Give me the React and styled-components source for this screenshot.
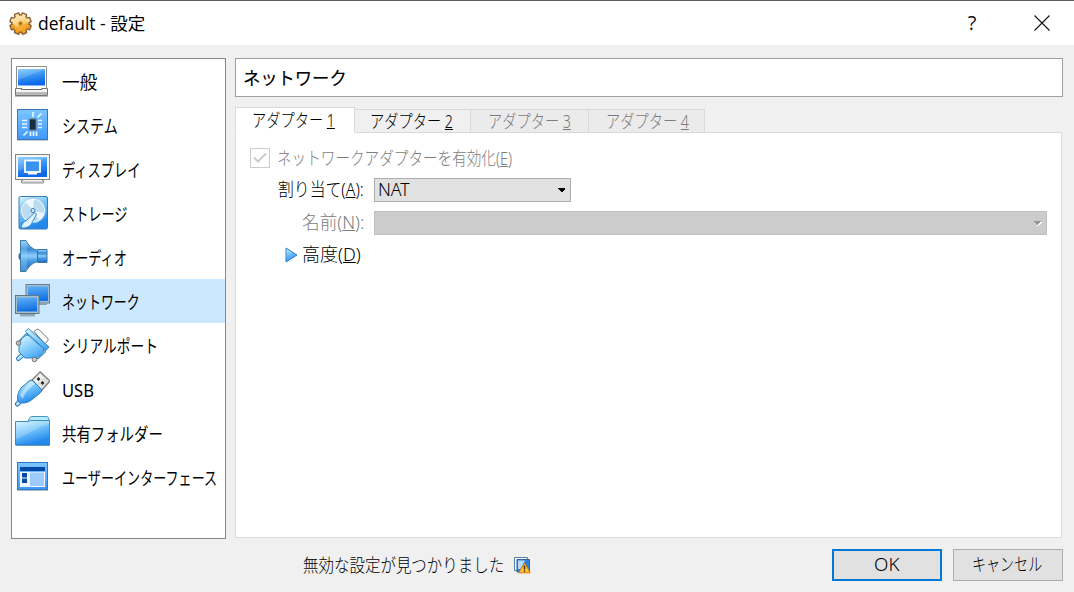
import React from 'react';
import styled, { createGlobalStyle } from 'styled-components';

const Global = createGlobalStyle`
  * { box-sizing: border-box; }
  html, body { margin: 0; padding: 0; background: #f0f0f0; overflow: hidden; }
  body { font-family: "Noto Sans", "Noto Sans CJK JP", sans-serif; font-size: 18px; color: #000; }
  svg { display: block; flex: none; }
`;

const Window = styled.div`
  width: 1074px;
  height: 592px;
  display: flex;
  flex-direction: column;
  background: #f0f0f0;
  border-top: 1px solid #5d5b5d;
`;

const TitleBar = styled.header`
  height: 44px;
  display: flex;
  align-items: center;
  padding: 0 22px 0 8px;
  background: #fff;
  flex: none;
`;

const TitleText = styled.h1`
  flex: 1;
  margin: 0 0 0 5px;
  font: 400 17.5px/24px "Open Sans", "Noto Sans CJK JP", sans-serif;
`;

const CaptionButton = styled.button`
  display: flex;
  align-items: center;
  justify-content: center;
  width: 20px;
  height: 24px;
  margin-left: ${p => p.$gap || 0}px;
  padding: 0;
  border: 0;
  background: none;
  font: 400 20px/24px "Open Sans", sans-serif;
  color: #111;
`;

const Body = styled.main`
  display: flex;
  gap: 9px;
  padding: 13px 11px 0;
  height: 494px;
  flex: none;
`;

const Sidebar = styled.nav`
  width: 215px;
  border: 1px solid #828790;
  background: #fff;
`;

const NavItem = styled.div`
  display: flex;
  align-items: center;
  gap: 12px;
  height: 44px;
  padding-left: 2px;
  background: ${p => (p.$active ? '#cce8ff' : 'transparent')};
`;

const Label = styled.span`
  display: inline-block;
  flex: none;
  white-space: nowrap;
  width: ${p => p.$width}px;
  height: 26px;
  line-height: 26px;
  font-size: ${p => p.$size || 18}px;
  font-weight: ${p => p.$weight || 400};
  color: ${p => (p.$disabled ? '#7c7c7c' : '#000')};
  -webkit-text-stroke: ${p => p.$stroke || 0}px currentColor;
  > span {
    display: inline-block;
    transform-origin: left;
    transform: scaleX(${p => p.$scale || 1});
  }
  u { text-decoration-thickness: 1px; text-underline-offset: 1px; text-decoration-skip-ink: none; }
`;

const NavLabel = styled(Label)`
  margin-top: 2px;
`;

function Text({ children, as: Tag = Label, ...rest }) {
  return <Tag {...rest}><span>{children}</span></Tag>;
}

const Content = styled.section`
  width: 828px;
  display: flex;
  flex-direction: column;
`;

const PageHeader = styled.div`
  height: 39px;
  padding: 6px 0 0 7px;
  border: 1px solid #a0a0a0;
  background: #fff;
  flex: none;
`;

const Tabs = styled.div`
  display: flex;
  align-items: flex-end;
  height: 26px;
  margin: 10px 0 -1px;
  flex: none;
  position: relative;
  z-index: 1;
`;

const Tab = styled.div`
  display: flex;
  width: ${p => p.$w}px;
  height: ${p => (p.$active ? 26 : 24)}px;
  padding: 0 0 0 ${p => p.$pad}px;
  border: 1px solid #d9d9d9;
  border-left-width: ${p => (p.$active ? 1 : 0)}px;
  border-bottom-color: ${p => (p.$active ? '#fff' : '#d9d9d9')};
  background: ${p => (p.$active ? '#fff' : p.$disabled ? '#ebebeb' : '#f0f0f0')};
  > * { line-height: ${p => (p.$active ? 24 : 23)}px; }
`;

const Pane = styled.div`
  width: 827px;
  height: 406px;
  flex: none;
  padding: 12px 14px;
  border: 1px solid #dcdcdc;
  background: #fff;
`;

const Row = styled.div`
  display: flex;
  align-items: center;
  justify-content: flex-start;
  height: ${p => p.$h || 33}px;
  ${Label} { line-height: 24px; }
`;

const FieldLabel = styled.div`
  display: flex;
  justify-content: flex-end;
  width: 114px;
  margin-right: 10px;
`;

const CheckBox = styled.div`
  width: 20px;
  height: 20px;
  margin-right: 7px;
  margin-top: -1px;
  border: 1px solid #ccc;
  background: #fff;
`;

const Combo = styled.div`
  display: flex;
  align-items: center;
  justify-content: space-between;
  width: ${p => p.$w}px;
  height: 24px;
  padding: 0 4px 0 3px;
  border: 1px solid ${p => (p.$disabled ? '#bfbfbf' : '#adadad')};
  background: ${p => (p.$disabled ? '#ccc' : '#e1e1e1')};
`;

const Expander = styled.div`
  display: flex;
  align-items: center;
  gap: 4px;
  padding-left: 35px;
`;

const Footer = styled.footer`
  display: flex;
  align-items: center;
  height: 51px;
  padding: 0 11px 0 303px;
`;

const Warning = styled.div`
  display: flex;
  align-items: center;
  gap: 10px;
  flex: 1;
`;

const Button = styled.button`
  display: flex;
  align-items: center;
  justify-content: center;
  width: 110px;
  height: 32px;
  padding: 0 2px 0 0;
  margin-left: 11px;
  font-family: inherit;
  background: #e1e1e1;
  border: ${p => (p.$primary ? '2px solid #0078d7' : '1px solid #adadad')};
  ${Label} { line-height: 25px; }
`;

const DefsSvg = styled.svg`
  position: absolute;
`;

const Defs = () => (
  <DefsSvg width="0" height="0">
    <defs>
      <linearGradient id="screen" x1="0" y1="0" x2="0.25" y2="1">
        <stop offset="0" stopColor="#7cc8fb" /><stop offset=".45" stopColor="#3b97f3" /><stop offset="1" stopColor="#0b66ea" />
      </linearGradient>
      <linearGradient id="monitor" x1="0" y1="0" x2="0.15" y2="1">
        <stop offset="0" stopColor="#5fb0f5" /><stop offset="1" stopColor="#1270e2" />
      </linearGradient>
      <linearGradient id="soft" x1="0" y1="0" x2="0.4" y2="1">
        <stop offset="0" stopColor="#d9f5ff" /><stop offset=".45" stopColor="#7ac9fb" /><stop offset="1" stopColor="#2388ec" />
      </linearGradient>
      <linearGradient id="plug" x1="0" y1="0" x2="0.6" y2="1">
        <stop offset="0" stopColor="#e4f7ff" /><stop offset=".5" stopColor="#92d4fc" /><stop offset="1" stopColor="#4aa9f4" />
      </linearGradient>
      <linearGradient id="chip" x1="0" y1="0" x2="0" y2="1">
        <stop offset="0" stopColor="#7dc6ff" /><stop offset="1" stopColor="#3f98fa" />
      </linearGradient>
      <linearGradient id="cone" x1="0" y1="0" x2="0" y2="1">
        <stop offset="0" stopColor="#a5dcff" /><stop offset=".28" stopColor="#3488d4" /><stop offset=".5" stopColor="#8ed0fb" /><stop offset=".65" stopColor="#4a9fe6" /><stop offset="1" stopColor="#1c69b8" />
      </linearGradient>
      <linearGradient id="gold" gradientUnits="userSpaceOnUse" x1="-5" y1="-10" x2="5" y2="10">
        <stop offset="0" stopColor="#fff4d4" /><stop offset=".45" stopColor="#fad27c" /><stop offset="1" stopColor="#f09a12" />
      </linearGradient>
    </defs>
  </DefsSvg>
);

const Icon = ({ children }) => <svg width="36" height="36" viewBox="0 0 36 36">{children}</svg>;

const GeneralIcon = () => (
  <Icon>
    <path d="M2.500 3.500H32.500V26H2.500Z" fill="#fff" stroke="#8d8d8d" />
    <path d="M4 6H31V22.500H4Z" fill="url(#screen)" />
    <path d="M4 6H31L4 17Z" fill="#fff" opacity=".16" />
    <path d="M1.500 25.500H33.500V32.500H1.500Z" fill="#f5f5f5" stroke="#777" />
    <path d="M7.500 25V26.500H28V25" fill="#fff" stroke="#666" />
    <path d="M2 29H33V32H2Z" fill="#b9b9b9" />
    <path d="M1 33.500H34" stroke="#bbb" />
  </Icon>
);

const SystemIcon = () => (
  <Icon>
    <rect x="3.500" y="2.500" width="30" height="30" fill="url(#chip)" stroke="#3577bb" />
    <path d="M3 33.500H34" stroke="#ccc" />
    <rect x="15.500" y="12" width="6.500" height="11" fill="#182c43" stroke="#6b7986" />
    <path d="M19 5V10M8 13.500H13M8 17H13M8 20.500H13M24 13.500H28M24 17H28M24 20.500H28M16.500 24.500V29M19.500 24.500V29M22.500 24.500V29M23.500 10.500L27.500 6.500M9.500 28.500L13.500 24.500" stroke="#e2f6ff" strokeWidth="1.700" />
  </Icon>
);

const DisplayIcon = () => (
  <Icon>
    <rect x="1.500" y="3.500" width="34" height="25" fill="#f7f7f4" stroke="#858585" />
    <rect x="4" y="6" width="29" height="20" fill="url(#screen)" />
    <path d="M4 6H33L4 20Z" fill="#fff" opacity=".17" />
    <rect x="11" y="9.500" width="15" height="11.500" fill="#3a91ee" stroke="#fff" strokeWidth="1.800" />
    <path d="M14 22.500H23" stroke="#fff" strokeWidth="2" />
    <path d="M7.500 29.500H29.500V32H7.500Z" fill="#d5d5d5" stroke="#929292" />
    <path d="M9 29.500H28" stroke="#f4f4f4" />
  </Icon>
);

const StorageIcon = () => (
  <Icon>
    <rect x="5" y="1.500" width="28.500" height="32.500" rx="1.500" fill="url(#soft)" stroke="#347cb7" />
    <path d="M7 28L32 24V33H7Z" fill="#278ae7" opacity=".45" />
    <circle cx="19" cy="15.500" r="11.800" fill="#bcdcf1" stroke="#f4fcff" strokeWidth="1.400" />
    <path d="M19 15L11 7A11 11 0 0 1 20 4ZM19 16L30 18A11 11 0 0 1 25 25Z" fill="#fff" opacity=".75" />
    <circle cx="19" cy="15.500" r="12.400" fill="none" stroke="#69aada" strokeWidth=".6" />
    <circle cx="19" cy="15.500" r="2" fill="#d9eef8" stroke="#3579ad" />
    <path d="M21 17.500L22.500 19L18 28C16 32 10 34 7 32.500C7.500 29 9.500 27 13 25Z" fill="#e1f4fe" stroke="#3a8acb" />
  </Icon>
);

const AudioIcon = () => (
  <Icon>
    <path d="M8 13.500C4 12.500 4 22.500 8 21.500Z" fill="#2879bd" stroke="#216299" />
    <path d="M6.500 1.500H12C14 6 18 10 23.500 11.500V22.500C18 24 14 28 12 32.500H6.500Z" fill="url(#cone)" stroke="#3979ac" />
    <path d="M7 2H13V32H7Z" fill="#8ccbf8" opacity=".4" />
    <path d="M23.500 10.500H33V23.500H23.500Z" fill="url(#cone)" stroke="#3772a4" />
  </Icon>
);

const NetworkIcon = () => (
  <Icon>
    <rect x="12" y="1.500" width="23.500" height="18.500" fill="#a1bdcf" stroke="#657e91" />
    <rect x="14" y="3.500" width="20" height="14.500" fill="url(#monitor)" />
    <path d="M25 20H33V22H25Z" fill="#8ba2b0" />
    <rect x="1.500" y="12.500" width="23.500" height="18" fill="#a4c0cd" stroke="#5f7888" />
    <rect x="3" y="14.500" width="20" height="14" fill="url(#monitor)" />
    <path d="M6.500 31.500H20.500V33H6.500Z" fill="#acc0c8" stroke="#758995" strokeWidth=".7" />
  </Icon>
);

const SerialIcon = () => (
  <Icon>
    <path d="M20 4.500L22.500 2.500Q24 1.500 25.500 3L33.500 11Q35 12.500 33.500 14L31 17Z" fill="#f8f8f8" stroke="#777" />
    <path d="M5 14L12 6.500L15 9L7.500 17Z" fill="#92caf3" stroke="#3377ab" />
    <path d="M21 30L29 22L32 24.500L24 32Z" fill="#92caf3" stroke="#3377ab" />
    <path d="M9 27.500L4.500 31.500" stroke="#2a79bc" strokeWidth="5" strokeLinecap="round" />
    <path d="M9 27.500L4.500 31.500" stroke="#b9e4fc" strokeWidth="3" strokeLinecap="round" />
    <path d="M14 8L30 22C29 27 25 31 19 31H11L5 25V19C6 13 9 9 14 8Z" fill="url(#plug)" stroke="#278ace" strokeLinejoin="round" />
    <path d="M11.500 4.500L14.500 1.500L35 20L32 23.500Z" fill="url(#plug)" stroke="#2f86c9" strokeLinejoin="round" />
    <circle cx="4.500" cy="16" r="2.300" fill="#bbb" stroke="#777" />
    <circle cx="20.500" cy="32.500" r="2.300" fill="#ccc" stroke="#777" />
  </Icon>
);

const UsbIcon = () => (
  <Icon>
    <path d="M18 9L26 .8L36 10L27 20Z" fill="#dededc" stroke="#777" strokeWidth="1.200" strokeLinejoin="round" />
    <path d="M20 9L26 3L30 6.500L23 12Z" fill="#fff" opacity=".6" />
    <path d="M23.500 7L25.500 9M27.500 11L29.500 13" stroke="#222" strokeWidth="2.500" />
    <path d="M6 30L3.500 33" stroke="#2470a8" strokeWidth="5" strokeLinecap="round" />
    <path d="M6 30L3.500 33" stroke="#b4e0fa" strokeWidth="3" strokeLinecap="round" />
    <path d="M15 10Q17 8 19 10L27.500 18.500Q28 20 26 22L18 28.500C14 32 8 33 5 31C2 28 4 20 8 16Z" fill="url(#soft)" stroke="#257bc3" />
    <path d="M6 24C9 18 14 13 18 10L21 13C15 17 10 23 9 28Z" fill="#fff" opacity=".45" />
  </Icon>
);

const FolderIcon = () => (
  <Icon>
    <path d="M13.500 7L16 2.500Q16.500 1.500 18 1.500H33Q35 2 35 5V10H13Z" fill="#b5ecfd" stroke="#4994bc" />
    <path d="M1.500 6.500H14L17 5.500H35.500V30H1.500Z" fill="url(#soft)" stroke="#408cbb" />
    <path d="M2 7H14L17 6H35V9C22 12 12 21 2 24Z" fill="#fff" opacity=".2" />
    <path d="M2 30H36" stroke="#2378cf" />
  </Icon>
);

const UiIcon = () => (
  <Icon>
    <rect x="3.500" y="3.500" width="30" height="27" fill="url(#chip)" stroke="#287bcb" />
    <path d="M6 8H31V12H6Z" fill="#0749a8" />
    <path d="M6 13H31V28H6Z" fill="#eef8ff" />
    <path d="M16 13.500H30V27H16Z" fill="#9dcaff" />
    <path d="M8 14H13V18.500H8ZM8 19.500H13V24H8Z" fill="#0749a8" />
    <path d="M3 31.500H34" stroke="#bbb" />
  </Icon>
);

const teeth = [0, 45, 90, 135, 180, 225, 270, 315];

const GearIcon = () => (
  <svg width="25" height="25" viewBox="-12.500 -12.500 25 25">
    <g fill="#bfae9c" opacity=".55" transform="translate(.6 1.200)">
      {teeth.map(a => <rect key={a} x="-2.800" y="-11" width="5.600" height="6" rx="1" transform={`rotate(${a + 22.5})`} />)}
    </g>
    <g fill="#86592e">
      {teeth.map(a => <rect key={a} x="-3" y="-11.300" width="6" height="6" rx="1.300" transform={`rotate(${a + 22.5})`} />)}
      <circle r="9.200" />
    </g>
    <g fill="url(#gold)">
      <circle r="8" />
    </g>
    <g fill="#fbd384">
      {teeth.map(a => <rect key={a} x="-1.800" y="-10" width="3.600" height="4" rx=".6" fill={a > 60 && a < 240 ? '#f3a32a' : '#fce0a4'} transform={`rotate(${a + 22.5})`} />)}
    </g>
    <path d="M-7.500 2C-3 3.500 3 2 7.500 -2C8.500 4 4 8 0 8C-4 8 -7 5 -7.500 2Z" fill="#f0a01c" opacity=".5" />
    <circle r="1.900" fill="#a86d18" stroke="#dfa241" />
  </svg>
);

const WarningIcon = () => (
  <svg width="17" height="18" viewBox="0 0 17 18">
    <path d="M.5 1.500H13.500V14.500H.5Z" fill="#f4faff" stroke="#547da8" />
    <path d="M3 3.500H15.500V16H3Z" fill="#2f7fda" stroke="#32629c" />
    <path d="M4 4.500H11L6.500 13H4Z" fill="#b5ddff" />
    <path d="M10.500 7L16.200 16.800H4.800Z" fill="#ffc535" stroke="#e77d00" strokeLinejoin="round" />
    <path d="M10.500 9.500V13.500M10.500 14.300V15.800" stroke="#3d2b10" strokeWidth="1.400" />
  </svg>
);

const Arrow = ({ disabled }) => (
  <svg width="9" height="5" viewBox="0 0 9 5" shapeRendering="crispEdges">
    {disabled && <path d="M8.500 1L4.500 5" stroke="#fff" strokeWidth="1.500" />}
    <path d={disabled ? 'M0 0H8L4 4Z' : 'M1 0H8V1L4.500 4.500L1 1Z'} fill={disabled ? '#969696' : '#000'} />
  </svg>
);

const nav = [
  ['一般', GeneralIcon, 0.98],
  ['システム', SystemIcon, 0.78],
  ['ディスプレイ', DisplayIcon, 0.735],
  ['ストレージ', StorageIcon, 0.73],
  ['オーディオ', AudioIcon, 0.73],
  ['ネットワーク', NetworkIcon, 0.72],
  ['シリアルポート', SerialIcon, 0.762],
  ['USB', UsbIcon, 0.92],
  ['共有フォルダー', FolderIcon, 0.8],
  ['ユーザーインターフェース', UiIcon, 0.726],
];

export default function App() {
  return (
    <Window>
      <Global />
      <Defs />
      <TitleBar>
        <GearIcon />
        <TitleText>default - 設定</TitleText>
        <CaptionButton>?</CaptionButton>
        <CaptionButton $gap={50}>
          <svg width="16" height="16" viewBox="0 0 16 16"><path d="M.5 .5L15.500 15.500M15.500 .5L.5 15.500" stroke="#111" strokeWidth="1.100" /></svg>
        </CaptionButton>
      </TitleBar>
      <Body>
        <Sidebar>
          {nav.map(([name, Glyph, scale]) => (
            <NavItem key={name} $active={name === 'ネットワーク'}>
              <Glyph />
              <Text as={NavLabel} $width={156} $scale={scale}>{name}</Text>
            </NavItem>
          ))}
        </Sidebar>
        <Content>
          <PageHeader><Text $width={110} $scale={0.96} $stroke={0.15}>ネットワーク</Text></PageHeader>
          <Tabs>
            <Tab $active $w={120} $pad={16}><Text $width={84} $scale={0.79} $weight={300}>アダプター <u>1</u></Text></Tab>
            <Tab $w={116} $pad={15}><Text $width={84} $scale={0.79} $weight={300}>アダプター <u>2</u></Text></Tab>
            <Tab $w={118} $pad={17} $disabled><Text $width={84} $scale={0.79} $weight={300} $disabled>アダプター <u>3</u></Text></Tab>
            <Tab $w={116} $pad={17} $disabled><Text $width={84} $scale={0.79} $weight={300} $disabled>アダプター <u>4</u></Text></Tab>
          </Tabs>
          <Pane>
            <Row $h={27}>
              <CheckBox>
                <svg width="18" height="18" viewBox="0 0 18 18"><path d="M3 8.500L7 12.500L15 4.500" fill="none" stroke="#ccc" strokeWidth="2" /></svg>
              </CheckBox>
              <Text $width={236} $scale={0.811} $weight={300} $disabled>ネットワークアダプターを有効化(<u>E</u>)</Text>
            </Row>
            <Row $h={36}>
              <FieldLabel><Text $width={86} $scale={0.88} $weight={300}>割り当て(<u>A</u>):</Text></FieldLabel>
              <Combo $w={197}><Text $width={40} $scale={0.98} $weight={300}>NAT</Text><Arrow /></Combo>
            </Row>
            <Row $h={30}>
              <FieldLabel><Text $width={62} $scale={0.98} $weight={300} $disabled>名前(<u>N</u>):</Text></FieldLabel>
              <Combo $w={673} $disabled><span /><Arrow disabled /></Combo>
            </Row>
            <Row $h={34}>
              <Expander>
                <svg width="13" height="16" viewBox="0 0 13 16"><path d="M1 1L12 8L1 15Z" fill="url(#soft)" stroke="#2f82d0" strokeLinejoin="round" /></svg>
                <Text $width={60} $scale={1} $weight={300}>高度(<u>D</u>)</Text>
              </Expander>
            </Row>
          </Pane>
        </Content>
      </Body>
      <Footer>
        <Warning>
          <Text $width={201} $scale={0.86} $weight={300}>無効な設定が見つかりました</Text>
          <WarningIcon />
        </Warning>
        <Button $primary><Text $width={26} $scale={1.04} $weight={300}>OK</Text></Button>
        <Button><Text $width={70} $scale={0.78} $weight={300}>キャンセル</Text></Button>
      </Footer>
    </Window>
  );
}
